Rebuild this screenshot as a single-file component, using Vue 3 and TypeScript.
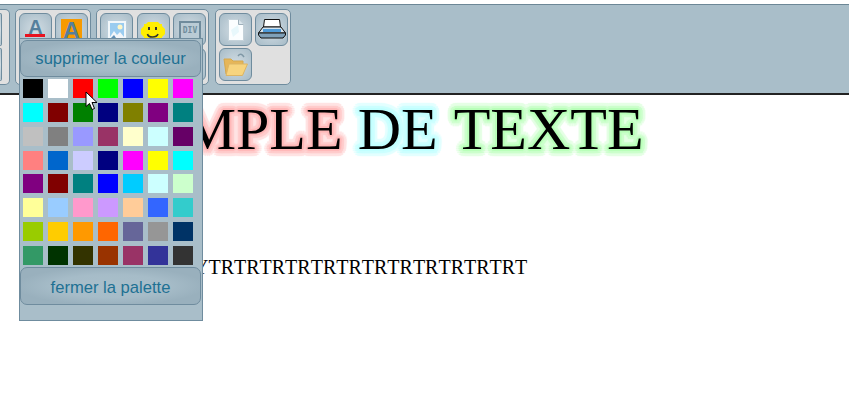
<script setup lang="ts">
const colors: string[] = [
  '#000000','#ffffff','#ff0000','#00ff00','#0000ff','#ffff00','#ff00ff',
  '#00ffff','#800000','#008000','#000080','#808000','#800080','#008080',
  '#c0c0c0','#808080','#9999ff','#993366','#ffffcc','#ccffff','#660066',
  '#ff8080','#0066cc','#ccccff','#000080','#ff00ff','#ffff00','#00ffff',
  '#800080','#800000','#008080','#0000ff','#00ccff','#ccffff','#ccffcc',
  '#ffff99','#99ccff','#ff99cc','#cc99ff','#ffcc99','#3366ff','#33cccc',
  '#99cc00','#ffcc00','#ff9900','#ff6600','#666699','#969696','#003366',
  '#339966','#003300','#333300','#993300','#993366','#333399','#333333',
]

// Stepped halo: three concentric rings of hard-edged shadows around the glyphs.
function ring(radius: number, color: string, steps: number): string[] {
  const out: string[] = []
  for (let i = 0; i < steps; i++) {
    const a = (i / steps) * Math.PI * 2
    const x = (Math.cos(a) * radius).toFixed(1)
    const y = (Math.sin(a) * radius).toFixed(1)
    out.push(`${x}px ${y}px 1px ${color}`)
  }
  return out
}
function halo(inner: string, mid: string, outer: string): string {
  return [
    ...ring(2, inner, 8),
    ...ring(4.5, mid, 14),
    ...ring(7, outer, 20),
  ].join(', ')
}
const red = halo('#ffb8b8', '#ffcccc', '#ffe3e3')
const cyan = halo('#c0ffff', '#ccffff', '#e3ffff')
const green = halo('#b8ffb8', '#ccffcc', '#e5ffe5')
</script>

<template>
  <div class="page">
    <div class="toolbar">
      <div class="group group-cut">
        <div class="tool"></div>
        <div class="tool"></div>
      </div>
      <div class="group cols-2">
        <div class="tool">
          <span class="letter">A</span>
          <span class="underline"></span>
        </div>
        <div class="tool">
          <span class="letter letter-bg">A</span>
        </div>
        <div class="tool"></div>
        <div class="tool"></div>
      </div>
      <div class="group cols-3">
        <div class="tool">
          <svg class="ic-image" width="20" height="24" viewBox="0 0 20 24">
            <rect x="0.5" y="0.5" width="19" height="23" fill="#f2f7fa" stroke="#bccfdb" />
            <rect x="3" y="3" width="14" height="18" fill="#9accf0" />
            <circle cx="13" cy="7" r="2.5" fill="#fdf6c8" />
            <path d="M3 17 L7 11 L10 15 L13 12 L17 17 V21 H3 Z" fill="#f2f6fa" />
            <path d="M3 19 L7 15 L11 21 H3 Z" fill="#5f8fb5" />
          </svg>
        </div>
        <div class="tool">
          <svg class="ic-smile" width="24" height="19" viewBox="0 0 24 19">
            <path d="M7 0 H17 L19 2 H21 V4 L24 7 V12 L21 15 V16 H18 L15 19 H9 L6 16 H3 V15 L0 12 V7 L3 4 V2 H5 Z" fill="#ffee00" />
            <rect x="7" y="5" width="2" height="3" fill="#333" />
            <rect x="14" y="5" width="2" height="3" fill="#333" />
            <path d="M6.5 12 Q7 15 11.5 15 Q16 15 17 12" fill="none" stroke="#333" stroke-width="1.6" />
          </svg>
        </div>
        <div class="tool">
          <svg class="ic-div" width="22" height="22" viewBox="0 0 22 22">
            <rect x="1" y="1" width="20" height="20" fill="#b9cbd5" stroke="#6f8b9c" stroke-width="2" />
            <text x="11" y="12" class="div-label" text-anchor="middle">DIV</text>
          </svg>
        </div>
        <div class="tool"></div>
        <div class="tool"></div>
        <div class="tool"></div>
      </div>
      <div class="group cols-2 last">
        <div class="tool">
          <svg width="16" height="22" viewBox="0 0 16 22">
            <path d="M0.5 0.5 H10.5 L15.5 5.5 V21.5 H0.5 Z" fill="#fbfeff" stroke="#c4d2da" />
            <path d="M10.5 0.5 V5.5 H15.5" fill="#dbe6ec" stroke="#9eb0bb" />
            <path d="M3 11 L10 6 L11 13 L5 18 Z" fill="#e8f8fc" />
          </svg>
        </div>
        <div class="tool">
          <svg class="ic-print" width="28" height="20" viewBox="0 0 28 20">
            <path d="M6.5 0.5 H21.5 L22.5 8 H5.5 Z" fill="#ffffff" stroke="#111" />
            <path d="M5 8 H23 L27.5 14 H0.5 Z" fill="#d6e4ee" stroke="#111" />
            <rect x="5" y="10" width="18" height="3" fill="#4f9bd8" />
            <path d="M0.5 14 H27.5 V16 L25 19 H3 L0.5 16 Z" fill="#7fa0b8" stroke="#111" />
          </svg>
        </div>
        <div class="tool">
          <svg width="25" height="23" viewBox="0 0 25 23">
            <path d="M15 3 Q18 -1 21 4" fill="none" stroke="#7f98a6" stroke-width="1.5" />
            <path d="M1 6 H8 L10 8 H20 V21 H3 Z" fill="#e6b658" stroke="#d4a84e" />
            <path d="M6 11 H24.5 L19.5 22.5 H3 Z" fill="#f7d47e" stroke="#dcb564" />
          </svg>
        </div>
      </div>
    </div>

    <div class="document">
      <h1 class="headline"><span :style="{ textShadow: red }">EXEMPLE</span> <span :style="{ textShadow: cyan }">DE</span> <span class="word-last" :style="{ textShadow: green }">TEXTE</span></h1>
      <p class="line">YTRTRTRTRTRTRTRTRTRTRTRTRT</p>
    </div>

    <div class="palette">
      <button class="pal-btn pal-top">supprimer la couleur</button>
      <div class="swatches">
        <span
          v-for="(c, i) in colors"
          :key="i"
          class="swatch"
          :style="{ background: c }"
        ></span>
      </div>
      <button class="pal-btn pal-bottom">fermer la palette</button>
    </div>

    <svg class="cursor" width="14" height="20" viewBox="0 0 14 20">
      <path d="M1 1 V15.5 L4.5 12.5 L7 18.5 L9.5 17.5 L7 11.5 H12 Z" fill="#fff" stroke="#000" stroke-width="1" />
    </svg>
  </div>
</template>

<style scoped>
.page {
  position: relative;
  width: 849px;
  height: 415px;
  overflow: hidden;
  background: #fff;
  padding-top: 4px;
  box-sizing: border-box;
  font-family: "Liberation Sans", Arial, sans-serif;
}
.toolbar {
  display: flex;
  align-items: flex-start;
  gap: 5px;
  height: 91px;
  box-sizing: border-box;
  padding-top: 4px;
  background: #a9bec9;
  border-top: 1px solid #6c8796;
  border-bottom: 2px solid #222;
}
.group {
  display: grid;
  column-gap: 3px;
  row-gap: 2px;
  box-sizing: border-box;
  height: 76px;
  padding: 3px 2px 3px 3px;
  background: #e0e0e0;
  border: 1px solid #6f8c9e;
  border-radius: 5px;
  grid-auto-rows: 33px;
  grid-template-columns: repeat(2, 33px);
}
.group-cut {
  width: 10px;
  padding: 3px 0;
  border-left: 0;
  border-radius: 0 5px 5px 0;
  grid-template-columns: 2px;
}
.group-cut .tool {
  width: 2px;
  border-left: 0;
  border-radius: 0 5px 5px 0;
}
.cols-3 {
  column-gap: 3.5px;
  grid-template-columns: repeat(3, 33px);
}
.last {
  margin-left: 1px;
}
.tool {
  position: relative;
  display: flex;
  align-items: center;
  justify-content: center;
  box-sizing: border-box;
  border: 1px solid #6f8c9e;
  border-radius: 6px;
  background: radial-gradient(ellipse at center, #d0dce3 0%, #bfced7 45%, #a6bbc7 100%);
}
.letter {
  margin-top: -6px;
  font-size: 20px;
  font-weight: 700;
  line-height: 20px;
  color: #557f9c;
}
.letter-bg {
  width: 21px;
  height: 24px;
  margin-top: 3px;
  font-size: 24px;
  line-height: 24px;
  text-align: center;
  background: #f79a00;
}
.underline {
  position: absolute;
  left: 5px;
  right: 6px;
  top: 20px;
  height: 3px;
  background: #e8121f;
}
.ic-image {
  margin-top: 5px;
}
.ic-smile {
  margin-top: 4px;
}
.ic-div {
  margin-top: 5px;
}
.ic-print {
  margin-top: -2px;
}
.div-label {
  font-family: "DejaVu Sans Mono", monospace;
  font-size: 8px;
  font-weight: 700;
  fill: #6f8b9c;
}
.document {
  font-kerning: none;
}
.headline {
  margin: 0;
  padding-left: 66px;
  font-family: "Liberation Serif", "Times New Roman", serif;
  font-size: 60px;
  font-weight: 400;
  line-height: 68px;
  color: #000;
  white-space: nowrap;
}
.word-last {
  margin-left: 1px;
}
.line {
  margin: 93px 0 0 0;
  padding-left: 194px;
  font-family: "Liberation Serif", "Times New Roman", serif;
  font-size: 20px;
  line-height: 23px;
  color: #000;
  white-space: nowrap;
}
.palette {
  position: absolute;
  left: 19px;
  top: 38px;
  width: 184px;
  height: 283px;
  box-sizing: border-box;
  padding: 1px 1px 0 0;
  background: #a9bec9;
  border: 1px solid #6f8c9e;
}
.pal-btn {
  display: block;
  width: 181px;
  height: 38px;
  padding: 0;
  font-family: "Liberation Sans", Arial, sans-serif;
  font-size: 16.6px;
  color: #1e7193;
  border: 1px solid #6f8c9e;
  border-radius: 7px;
  background: radial-gradient(ellipse at center, #a9bfca 0%, #a6bcc8 45%, #99b0bd 75%);
}
.pal-top {
  height: 37px;
  padding-top: 1px;
}
.swatches {
  display: grid;
  grid-template-columns: repeat(7, 20px);
  grid-auto-rows: 19px;
  column-gap: 5px;
  row-gap: 4.86px;
  padding: 2px 0 0 3px;
}
.swatch {
  display: block;
}
.pal-bottom {
  margin-top: 2px;
  padding-top: 3px;
}
.cursor {
  position: absolute;
  left: 85px;
  top: 91px;
}
</style>
